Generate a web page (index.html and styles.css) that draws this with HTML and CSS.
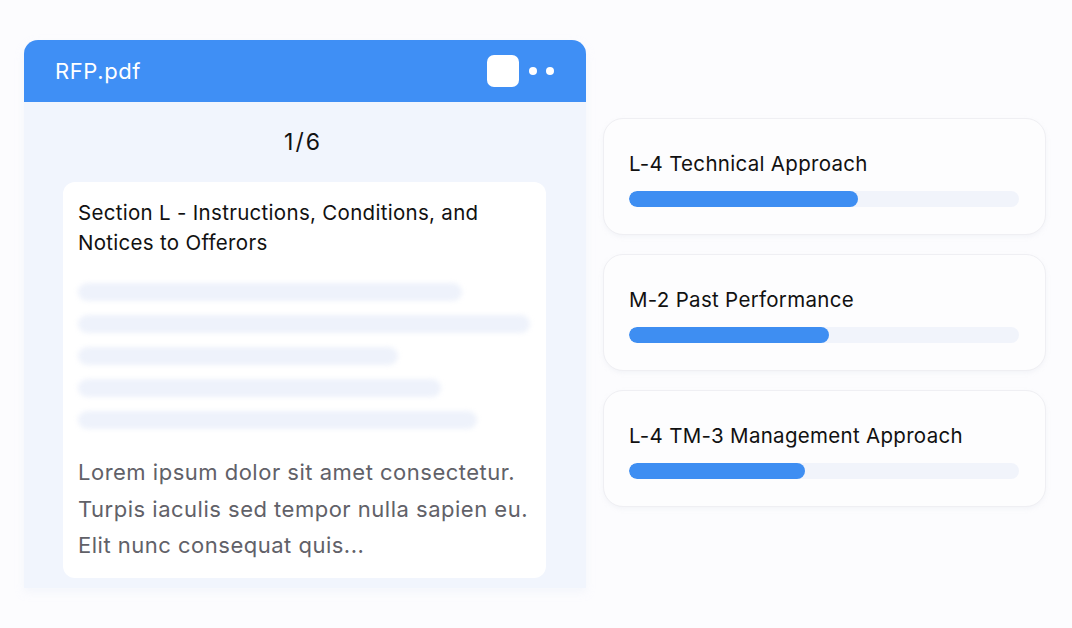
FILE: index.html
```html
<!DOCTYPE html>
<html lang="en">
<head>
<meta charset="utf-8">
<title>RFP</title>
<link rel="stylesheet" href="styles.css">
</head>
<body>
<main class="stage">
  <section class="window">
    <header class="win-head">
      <span class="win-title">RFP.pdf</span>
      <div class="win-ctrls">
        <span class="ctrl-square"></span>
        <span class="ctrl-dot"></span>
        <span class="ctrl-dot"></span>
      </div>
    </header>
    <div class="win-body">
      <div class="pager">1/6</div>
      <article class="page">
        <h2 class="page-title">Section L - Instructions, Conditions, and Notices to Offerors</h2>
        <div class="skeleton">
          <span class="sk-line" style="width:384px"></span>
          <span class="sk-line" style="width:452px"></span>
          <span class="sk-line" style="width:320px"></span>
          <span class="sk-line" style="width:363px"></span>
          <span class="sk-line" style="width:399px"></span>
        </div>
        <p class="lorem">Lorem ipsum dolor sit amet consectetur.<br>Turpis iaculis sed tempor nulla sapien eu.<br>Elit nunc consequat quis...</p>
      </article>
    </div>
  </section>
  <section class="sections">
    <div class="sec-card">
      <div class="sec-title">L-4 Technical Approach</div>
      <div class="track"><div class="fill" style="width:58.7%"></div></div>
    </div>
    <div class="sec-card">
      <div class="sec-title">M-2 Past Performance</div>
      <div class="track"><div class="fill" style="width:51.3%"></div></div>
    </div>
    <div class="sec-card">
      <div class="sec-title">L-4 TM-3 Management Approach</div>
      <div class="track"><div class="fill" style="width:45.1%"></div></div>
    </div>
  </section>
</main>
</body>
</html>
```

FILE: styles.css
```css
* { box-sizing: border-box; }
html, body { margin: 0; padding: 0; }
body {
  background: #fcfcfe;
  font-family: Inter, "Liberation Sans", sans-serif;
  width: 1072px;
  height: 628px;
  overflow: hidden;
}
.stage {
  display: flex;
  align-items: flex-start;
  padding: 40px 0 0 24px;
  gap: 17px;
}
.window {
  width: 562px;
  height: 548px;
  display: flex;
  flex-direction: column;
  border-radius: 14px 14px 0 0;
  overflow: hidden;
  background: #f1f5fd;
  box-shadow: 0 4px 8px rgba(230, 234, 245, 0.35);
}
.win-head {
  height: 62px;
  flex: none;
  background: #3f8ff5;
  display: flex;
  align-items: center;
  justify-content: space-between;
  padding: 0 32px 0 31px;
}
.win-title {
  color: #fff;
  font-size: 22px;
  letter-spacing: 0.6px;
}
.win-ctrls {
  display: flex;
  align-items: center;
  gap: 9px;
}
.ctrl-square {
  width: 32px;
  height: 32px;
  border-radius: 7px;
  background: #fff;
  margin-right: 1px;
}
.ctrl-dot {
  width: 8px;
  height: 8px;
  border-radius: 50%;
  background: #fff;
}
.win-body {
  flex: 1;
  display: flex;
  flex-direction: column;
  align-items: center;
  padding: 26px 40px 10px 39px;
}
.pager {
  font-size: 23px;
  line-height: 28px;
  color: #111;
  letter-spacing: 2px;
  margin-right: 3px;
  margin-bottom: 26px;
}
.page {
  align-self: stretch;
  background: #fff;
  border-radius: 12px;
  padding: 16px 15px 14px 15px;
}
.page-title {
  margin: 0;
  font-weight: 400;
  font-size: 20.5px;
  line-height: 30px;
  color: #111;
  letter-spacing: 0.3px;
}
.skeleton {
  display: flex;
  flex-direction: column;
  gap: 14px;
  margin-top: 25px;
}
.sk-line {
  display: block;
  height: 18px;
  border-radius: 9px;
  background: #eef2fb;
  filter: blur(2.5px);
}
.lorem {
  margin: 25px 0 0 0;
  font-size: 22px;
  line-height: 36.5px;
  color: #616168;
  letter-spacing: 0.5px;
  white-space: nowrap;
}
.sections {
  margin-top: 78px;
  display: flex;
  flex-direction: column;
  gap: 19px;
}
.sec-card {
  width: 443px;
  height: 117px;
  background: #fdfdfe;
  border: 1px solid #efeff3;
  border-radius: 20px;
  padding: 33px 26px 0 25px;
  box-shadow: 0 2px 4px rgba(220, 222, 232, 0.25);
}
.sec-title {
  font-size: 20.5px;
  line-height: 24px;
  color: #111;
  letter-spacing: 0.3px;
}
.track {
  margin-top: 15px;
  height: 16px;
  border-radius: 8px;
  background: #f1f4fb;
  overflow: hidden;
}
.fill {
  height: 100%;
  border-radius: 8px;
  background: #3e8ef2;
}
```
